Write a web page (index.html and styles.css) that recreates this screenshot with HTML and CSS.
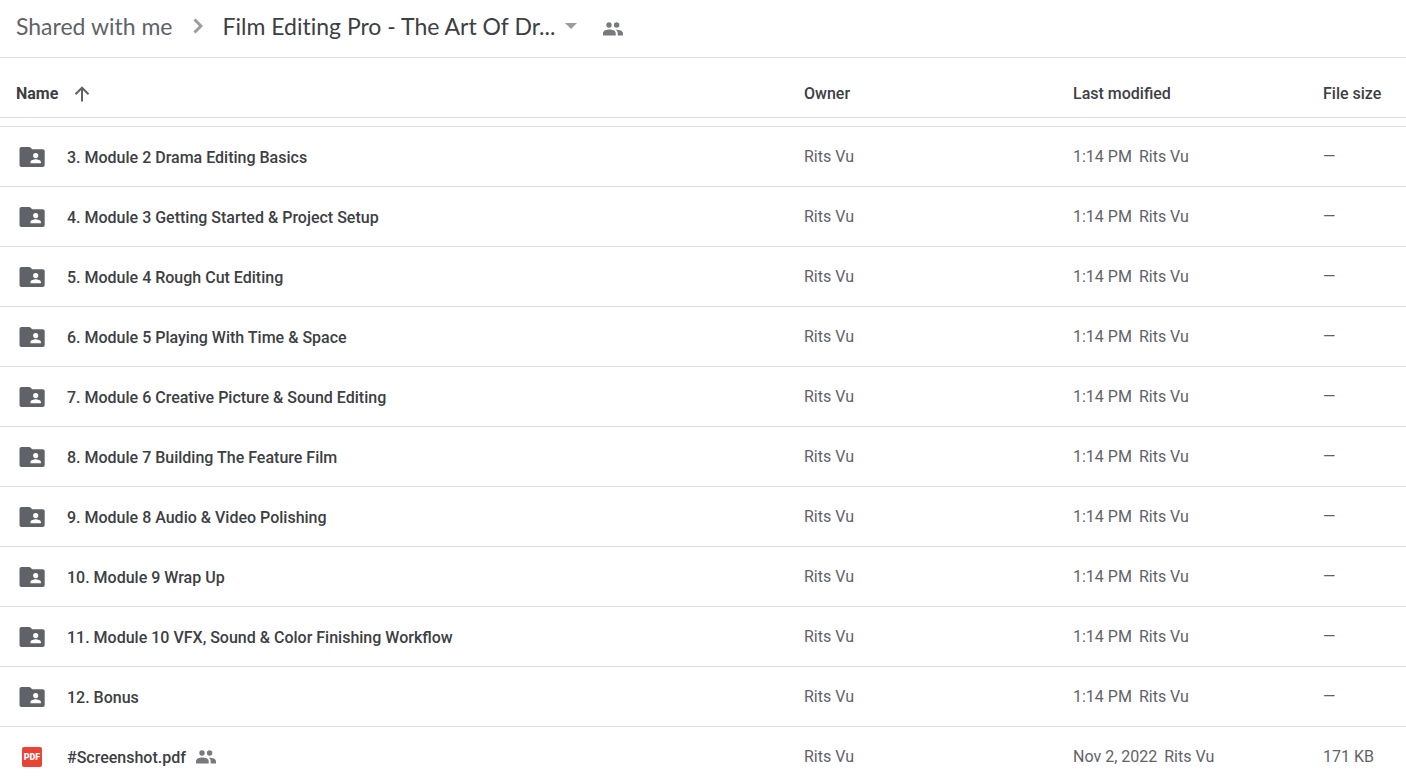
FILE: index.html
```html
<!DOCTYPE html>
<html lang="en">
<head>
    <meta charset="UTF-8">
    <meta name="viewport" content="width=device-width, initial-scale=1.0">
    <title>Film Editing Pro - The Art Of Drama Editing</title>
    <link rel="stylesheet" href="styles.css">
</head>
<body>

<!-- shared icons -->
<svg class="sprite" aria-hidden="true">
    <symbol id="icon-folder" viewBox="0 0 26 20">
        <path fill-rule="evenodd" d="M2.500 0h7.600c.6 0 1 .2 1.400.6L13.200 2.200H23.700c1.200 0 2 .9 2 2V18c0 1.100-.8 2-2 2H2.500c-1.100 0-2-.9-2-2V2C.5.9 1.400 0 2.500 0zM16.700 6a2.600 2.600 0 1 0 0 5.200 2.600 2.600 0 0 0 0-5.200zM11.500 16.200h10.400v-1.300c0-1.800-3.400-2.700-5.200-2.700s-5.200.9-5.200 2.700z"/>
    </symbol>
    <symbol id="icon-people" viewBox="0 0 20 14">
        <circle cx="6" cy="3" r="2.700"/>
        <path d="M0 13.500v-2.300C0 8.600 3.600 7.600 6.400 7.600s6.300 1 6.300 3.600v2.300z"/>
        <circle cx="13.600" cy="3" r="2.700"/>
        <path d="M13.300 7.700c3 0 6.700 1 6.700 3.500v2.300h-5.300v-2.300c0-1.500-.6-2.700-1.900-3.500z"/>
    </symbol>
</svg>

<div class="drive">
    <header class="breadcrumb">
        <a class="crumb" href="#">Shared with me</a>
        <svg class="chevron" width="10" height="16" viewBox="0 0 10 16"><path d="M1.500 1.500 8 8l-6.500 6.500"/></svg>
        <button class="crumb current" type="button">
            Film Editing Pro - The Art Of Dr...
            <svg class="caret" width="12" height="6" viewBox="0 0 12 6"><path d="M0 0h12L6 6z"/></svg>
        </button>
        <button class="share" type="button" aria-label="Manage access">
            <svg class="people" width="20" height="14"><use href="#icon-people"/></svg>
        </button>
    </header>

    <table class="files">
        <thead>
            <tr>
                <th class="name">
                    <button class="sort" type="button">
                        Name
                        <svg width="16" height="16" viewBox="0 0 16 16"><path d="M8 15.500V2M1.500 8.200 8 1.700l6.500 6.500"/></svg>
                    </button>
                </th>
                <th class="owner">Owner</th>
                <th class="modified">Last modified</th>
                <th class="size">File size</th>
            </tr>
        </thead>
        <tbody id="fileList"></tbody>
    </table>
</div>

<script>
    var files = [
        { name: '3. Module 2 Drama Editing Basics' },
        { name: '4. Module 3 Getting Started & Project Setup' },
        { name: '5. Module 4 Rough Cut Editing' },
        { name: '6. Module 5 Playing With Time & Space' },
        { name: '7. Module 6 Creative Picture & Sound Editing' },
        { name: '8. Module 7 Building The Feature Film' },
        { name: '9. Module 8 Audio & Video Polishing' },
        { name: '10. Module 9 Wrap Up' },
        { name: '11. Module 10 VFX, Sound & Color Finishing Workflow' },
        { name: '12. Bonus' },
        { name: '#Screenshot.pdf', pdf: true, date: 'Nov 2, 2022', size: '171 KB' }
    ];

    var folderIcon = '<svg class="folder" width="26" height="20"><use href="#icon-folder"/></svg>';
    var pdfIcon = '<span class="pdf">PDF</span>';
    var sharedIcon = '<svg class="people" width="20" height="14"><use href="#icon-people"/></svg>';

    document.getElementById('fileList').innerHTML = files.map(function (file) {
        return `
            <tr>
                <td class="name">
                    <div class="file">
                        <span class="file-icon">${file.pdf ? pdfIcon : folderIcon}</span>
                        <span class="file-name">${file.name.replace('&', '&amp;')}</span>
                        ${file.pdf ? sharedIcon : ''}
                    </div>
                </td>
                <td>Rits Vu</td>
                <td>${file.date || '1:14 PM'}<span class="by">Rits Vu</span></td>
                <td>${file.size || '—'}</td>
            </tr>`;
    }).join('');
</script>

</body>
</html>
```
FILE: styles.css
```css
* {
    box-sizing: border-box;
}
body {
    margin: 0;
    font-family: Roboto, Arial, sans-serif;
    font-size: 16px;
    color: #5f6368;
    background-color: #fff;
}
button {
    padding: 0;
    border: none;
    background: none;
    font: inherit;
    color: inherit;
    cursor: pointer;
}
.sprite {
    display: none;
}
.drive {
    height: 100vh;
    overflow: hidden;
}
.breadcrumb {
    display: flex;
    align-items: center;
    height: 58px;
    padding: 0 16px 5px;
    border-bottom: 1px solid #dadce0;
}
.crumb {
    font-family: Lato, sans-serif;
    font-size: 23px;
    font-variant-ligatures: none;
    line-height: 28px;
    color: #5f6368;
    text-decoration: none;
}
.crumb.current {
    display: flex;
    align-items: center;
    gap: 10px;
    color: #3c4043;
}
.chevron {
    margin: 0 20px;
    fill: none;
    stroke: #9a9c9f;
    stroke-width: 3;
}
.caret {
    fill: #9a9c9f;
}
.share {
    display: flex;
    margin-left: 26px;
    padding-top: 6px;
}
.people {
    fill: #77797c;
}
.files {
    width: 100%;
    table-layout: fixed;
    border-spacing: 0;
}
th, td {
    height: 60px;
    padding: 0;
    border-bottom: 1px solid #dadce0;
    text-align: left;
    white-space: nowrap;
}
th {
    padding-top: 12px;
    font-weight: 500;
    color: #3c4043;
}
th.name {
    padding-left: 16px;
    font-weight: 700;
}
th.owner {
    width: 269px;
}
th.modified {
    width: 250px;
}
th.size {
    width: 83px;
}
.sort {
    display: flex;
    align-items: center;
    gap: 16px;
}
.sort svg {
    fill: none;
    stroke: #5f6368;
    stroke-width: 2;
}
/* bottom edge of the row scrolled under the header */
tbody::before {
    content: "";
    display: block;
    height: 8px;
}
tbody tr:first-child td {
    height: 61px;
    border-top: 1px solid #dadce0;
}
td.name {
    font-weight: 500;
    color: #3c4043;
}
.file {
    display: flex;
    align-items: center;
}
.file-icon {
    display: flex;
    justify-content: center;
    width: 26px;
    margin: 0 22px 0 19px;
}
.file-name {
    padding-top: 2px;
}
.folder {
    fill: #5f6368;
}
.pdf {
    width: 20px;
    height: 20px;
    border-radius: 2px;
    background-color: #ea4335;
    font-size: 9px;
    font-weight: 900;
    line-height: 20px;
    text-align: center;
    color: #fff;
}
.file .people {
    margin-left: 10px;
}
.by {
    margin-left: 7px;
}
```
